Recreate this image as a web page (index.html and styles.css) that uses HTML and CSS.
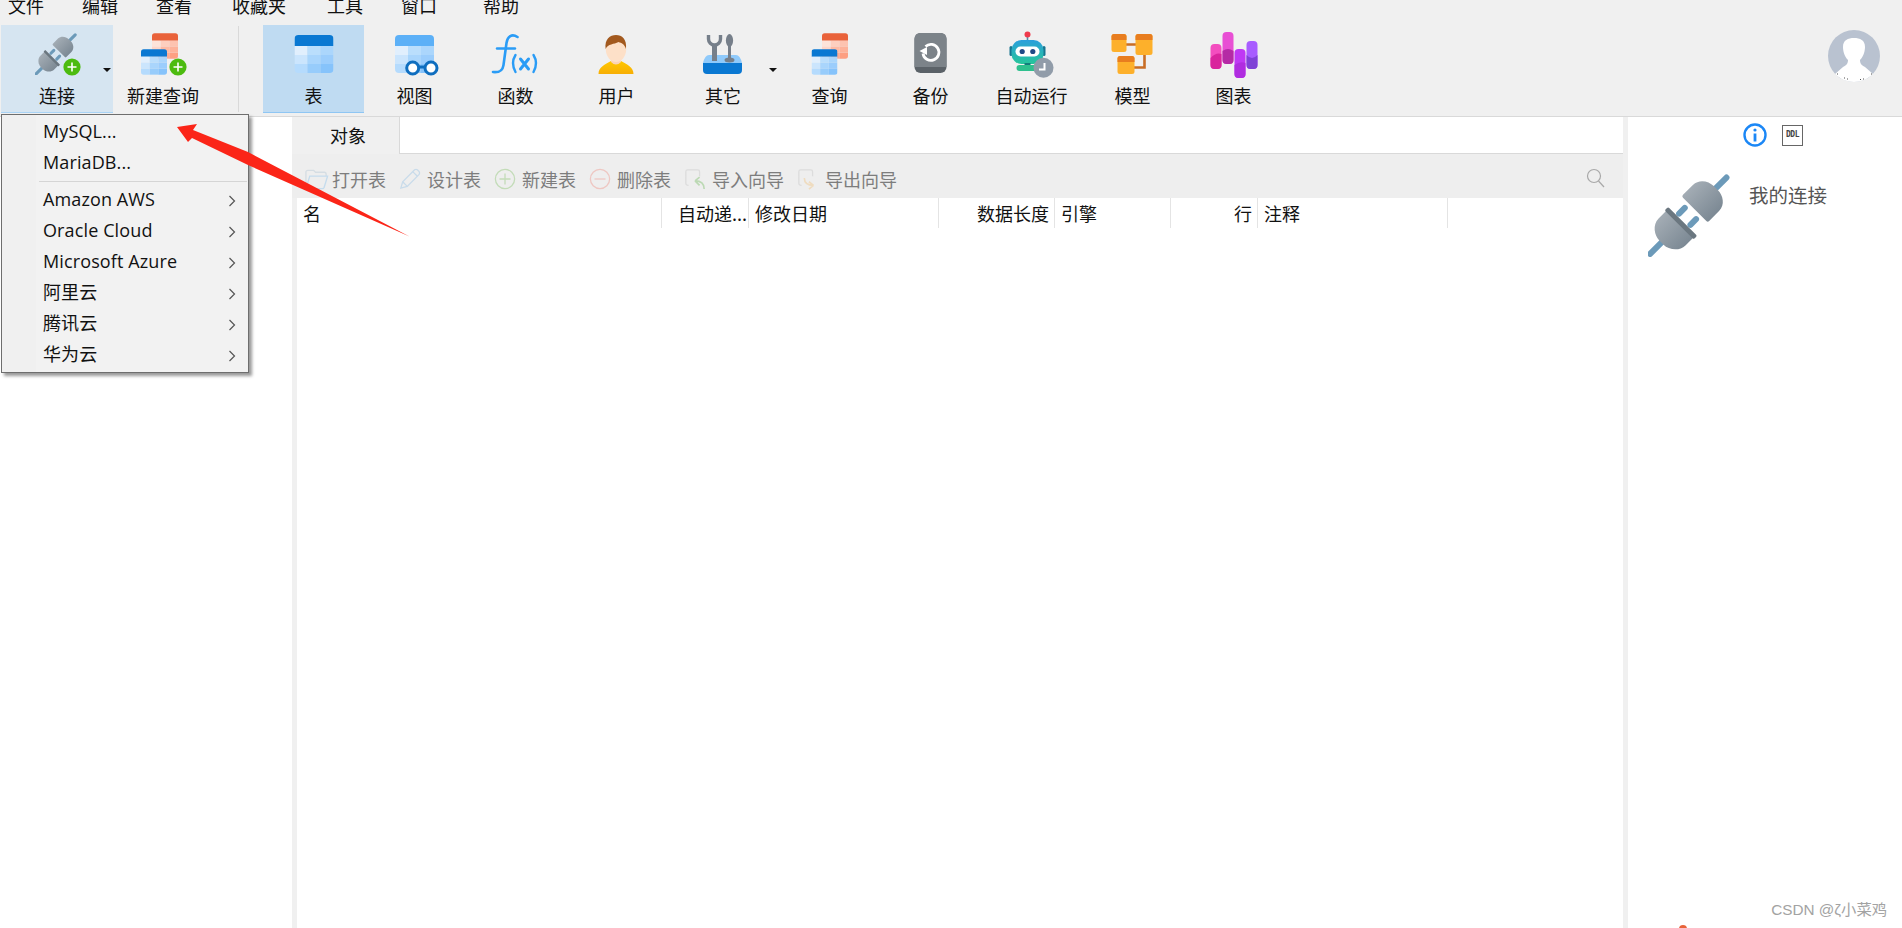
FILE: index.html
```html
<!DOCTYPE html>
<html lang="zh-CN">
<head>
<meta charset="utf-8">
<title>Navicat</title>
<link rel="stylesheet" href="styles.css">
</head>
<body>
<svg class="defs" aria-hidden="true">
  <defs>
    <linearGradient id="g-body2" x1="0" y1="0" x2="0" y2="1"><stop offset="0" stop-color="#a3acb4"/><stop offset="1" stop-color="#7c8994"/></linearGradient>
    <linearGradient id="g-amber" x1="0" y1="0" x2="0" y2="1"><stop offset="0" stop-color="#ffc800"/><stop offset="1" stop-color="#f7ae05"/></linearGradient>
    <linearGradient id="g-robot" x1="0" y1="0" x2="0" y2="1"><stop offset="0" stop-color="#2b9fdc"/><stop offset="1" stop-color="#26c59a"/></linearGradient>
    <symbol id="plug" viewBox="0 0 82 82">
      <g transform="translate(41 41) rotate(-45)">
        <rect x="34" y="-3" width="22" height="6" rx="3" fill="#6c9ab9"/>
        <path d="M10 -18.500 H24 C33 -18.500 38 -10 38 -3 V3 C38 10 33 18.500 24 18.500 H10 Q8 18.500 8 16.500 V-16.500 Q8 -18.500 10 -18.500 Z" fill="url(#g-body2)"/>
        <rect x="-9" y="-11" width="14" height="6" rx="3" fill="#6c9ab9"/>
        <rect x="-9" y="5" width="14" height="6" rx="3" fill="#6c9ab9"/>
        <rect x="-58" y="-3" width="24" height="6" rx="3" fill="#6c9ab9"/>
        <path d="M-11 -19 H-24 C-33 -19 -39 -10 -39 -3 V3 C-39 10 -33 19 -24 19 H-11 Z" fill="url(#g-body2)"/>
        <rect x="-14" y="-20.500" width="5" height="41" rx="1.500" fill="#6b7780"/>
      </g>
    </symbol>
    <symbol id="tbl-blue" viewBox="0 0 39 38">
      <path d="M0 11 V4 Q0 0 4 0 H35 Q39 0 39 4 V11 Z" fill="#0a78d2"/>
      <path d="M0 11 H13 V20 H0 Z" fill="#e1effd"/><path d="M13 11 H26 V20 H13 Z" fill="#badefc"/><path d="M26 11 H39 V20 H26 Z" fill="#abd6fc"/>
      <path d="M0 20 H13 V29 H0 Z" fill="#cbe5fd"/><path d="M13 20 H26 V29 H13 Z" fill="#a9d5fc"/><path d="M26 20 H39 V29 H26 Z" fill="#9bcdfc"/>
      <path d="M0 29 H13 V38 H4 Q0 38 0 34 Z" fill="#b5dbfd"/><path d="M13 29 H26 V38 H13 Z" fill="#97ccfb"/><path d="M26 29 H39 V34 Q39 38 35 38 H26 Z" fill="#86c3fb"/>
    </symbol>
    <symbol id="tbl-light" viewBox="0 0 39 38">
      <path d="M0 11 V4 Q0 0 4 0 H35 Q39 0 39 4 V11 Z" fill="#5cb0f7"/>
      <path d="M0 11 H13 V20 H0 Z" fill="#e1effd"/><path d="M13 11 H26 V20 H13 Z" fill="#badefc"/><path d="M26 11 H39 V20 H26 Z" fill="#abd6fc"/>
      <path d="M0 20 H13 V29 H0 Z" fill="#cbe5fd"/><path d="M13 20 H26 V29 H13 Z" fill="#a9d5fc"/><path d="M26 20 H39 V29 H26 Z" fill="#9bcdfc"/>
      <path d="M0 29 H13 V38 H4 Q0 38 0 34 Z" fill="#b5dbfd"/><path d="M13 29 H26 V38 H13 Z" fill="#97ccfb"/><path d="M26 29 H39 V34 Q39 38 35 38 H26 Z" fill="#86c3fb"/>
    </symbol>
    <symbol id="tbl-red" viewBox="0 0 39 38">
      <path d="M0 11 V4 Q0 0 4 0 H35 Q39 0 39 4 V11 Z" fill="#e9623a"/>
      <path d="M0 11 H13 V20 H0 Z" fill="#fde3d9"/><path d="M13 11 H26 V20 H13 Z" fill="#fdcfbf"/><path d="M26 11 H39 V20 H26 Z" fill="#fdc3b0"/>
      <path d="M0 20 H13 V29 H0 Z" fill="#fdd6c9"/><path d="M13 20 H26 V29 H13 Z" fill="#fdbba5"/><path d="M26 20 H39 V29 H26 Z" fill="#fdb29a"/>
      <path d="M0 29 H13 V38 H4 Q0 38 0 34 Z" fill="#fdc9b8"/><path d="M13 29 H26 V38 H13 Z" fill="#fdab90"/><path d="M26 29 H39 V34 Q39 38 35 38 H26 Z" fill="#fd9f82"/>
    </symbol>
    <symbol id="badge" viewBox="0 0 18 18">
      <circle cx="9" cy="9" r="8.600" fill="#4cbb0f"/>
      <path d="M4.500 9 H13.500 M9 4.500 V13.500" stroke="#fff" stroke-width="1.600"/>
    </symbol>
    <symbol id="chev" viewBox="0 0 8 12">
      <path d="M1.500 1 L6.500 6 L1.500 11" fill="none" stroke="#555" stroke-width="1.200"/>
    </symbol>
  </defs>
</svg>

<div class="app">
  <nav class="menubar">
    <span class="menu-item">文件</span>
    <span class="menu-item">编辑</span>
    <span class="menu-item">查看</span>
    <span class="menu-item">收藏夹</span>
    <span class="menu-item">工具</span>
    <span class="menu-item">窗口</span>
    <span class="menu-item">帮助</span>
  </nav>

  <header class="toolbar">
    <div class="tool tool-wide tool-hover">
      <svg class="tool-icon" viewBox="0 0 48 48"><use href="#plug" x="2" y="2" width="42" height="42"/><use href="#badge" x="30" y="27" width="18" height="18"/></svg>
      <span class="tool-label">连接</span>
      <i class="caret"></i>
    </div>
    <div class="tool tool-new">
      <svg class="tool-icon" viewBox="0 0 48 48"><use href="#tbl-red" x="13" y="2" width="26" height="26"/><use href="#tbl-blue" x="2" y="18" width="26" height="26"/><use href="#badge" x="30" y="27" width="18" height="18"/></svg>
      <span class="tool-label">新建查询</span>
    </div>
    <div class="tool-sep"></div>
    <div class="tool tool-active">
      <svg class="tool-icon" viewBox="0 0 48 48"><use href="#tbl-blue" x="4.500" y="4" width="39" height="38"/></svg>
      <span class="tool-label">表</span>
    </div>
    <div class="tool">
      <svg class="tool-icon" viewBox="0 0 48 48">
        <use href="#tbl-light" x="4" y="4" width="39" height="38"/>
        <path d="M27 36 H35" stroke="#0f6ebf" stroke-width="3"/>
        <circle cx="21.700" cy="37" r="6" fill="#fff" stroke="#0f6ebf" stroke-width="3"/>
        <circle cx="40" cy="37" r="6" fill="#fff" stroke="#0f6ebf" stroke-width="3"/>
      </svg>
      <span class="tool-label">视图</span>
    </div>
    <div class="tool">
      <svg class="tool-icon" viewBox="0 0 48 48" fill="none" stroke="#2a9cf6" stroke-linecap="round">
        <path d="M25.500 6 C20 2.500 15.500 5 14.500 12 L11.500 34 C10.500 41 6 41.500 1 41" stroke-width="2.600"/>
        <path d="M5 17.500 H23" stroke-width="2.400"/>
        <path d="M23.500 24 Q18.500 32 23.500 41" stroke-width="2.400"/>
        <path d="M28.500 28 L36.500 38 M36.500 28 L28.500 38" stroke-width="3"/>
        <path d="M41.500 24 Q46.500 32 41.500 41" stroke-width="2.400"/>
      </svg>
      <span class="tool-label">函数</span>
    </div>
    <div class="tool">
      <svg class="tool-icon" viewBox="0 0 48 48">
        <path d="M5.500 43 C5.500 36 12 33.500 18 30 H28 C34 33.500 40.500 36 40.500 43 Z" fill="url(#g-amber)"/>
        <path d="M18 26 H28 V31 Q23 36 18 31 Z" fill="#fbd3b5"/>
        <ellipse cx="23" cy="18" rx="10.200" ry="13" fill="#fde0c8"/>
        <path d="M12.600 18 C11.500 8 17 4 23 4 C29 4 34 8 33 18 C31.500 13 28.500 12 25.500 11 C21 13.500 15 12.500 12.600 18 Z" fill="#a2591e"/>
      </svg>
      <span class="tool-label">用户</span>
    </div>
    <div class="tool tool-wide">
      <svg class="tool-icon" viewBox="0 0 48 48">
        <path d="M10 24 H37 Q41 24 43 32 H4 Q6 24 10 24 Z" fill="#8fcafb"/>
        <path d="M9.500 4 V8 A6 6 0 0 0 21.500 8 V4" fill="none" stroke="#767f8a" stroke-width="3.400"/>
        <rect x="13" y="13" width="5" height="17" fill="#767f8a"/>
        <ellipse cx="30.500" cy="9.500" rx="3.600" ry="6.500" fill="#767f8a"/>
        <rect x="29" y="14" width="3" height="14" fill="#767f8a"/>
        <ellipse cx="30.500" cy="29" rx="5" ry="2.500" fill="#767f8a"/>
        <path d="M4 32 H43 V39 Q43 43 39 43 H8 Q4 43 4 39 Z" fill="#0a78d2"/>
      </svg>
      <span class="tool-label">其它</span>
      <i class="caret"></i>
    </div>
    <div class="tool">
      <svg class="tool-icon" viewBox="0 0 48 48"><use href="#tbl-red" x="16" y="2" width="26" height="26"/><use href="#tbl-blue" x="5.500" y="18" width="26" height="26"/></svg>
      <span class="tool-label">查询</span>
    </div>
    <div class="tool">
      <svg class="tool-icon" viewBox="0 0 48 48">
        <rect x="7.500" y="2" width="32" height="40" rx="6" fill="#5b6268"/>
        <path d="M13.500 2 H33.500 Q39.500 2 39.500 8 V36 H7.500 V8 Q7.500 2 13.500 2 Z" fill="#7c8389"/>
        <path d="M18.500 15.500 A8 8 0 1 1 16 22.500" fill="none" stroke="#fff" stroke-width="2.800"/>
        <path d="M12.500 20 L20 16 L20 24 Z" fill="#fff"/>
      </svg>
      <span class="tool-label">备份</span>
    </div>
    <div class="tool">
      <svg class="tool-icon" viewBox="0 0 48 48">
        <path d="M19.500 3 V11" stroke="#4d8fb0" stroke-width="1.600"/>
        <circle cx="19.500" cy="3.500" r="3" fill="#ef3b4d"/>
        <rect x="1.500" y="15" width="3" height="10" rx="1.500" fill="#17758f"/>
        <rect x="34.500" y="15" width="3" height="10" rx="1.500" fill="#17758f"/>
        <rect x="3.500" y="9" width="32" height="24" rx="10" fill="url(#g-robot)"/>
        <rect x="7.500" y="15.500" width="24" height="10" rx="5" fill="#fff"/>
        <circle cx="14.200" cy="20.500" r="2.600" fill="#1f4a86"/>
        <circle cx="24.800" cy="20.500" r="2.600" fill="#1f4a86"/>
        <rect x="16.500" y="32" width="6" height="3" fill="#137d7c"/>
        <rect x="8.500" y="34" width="24" height="6" rx="3" fill="#2fc08e"/>
        <circle cx="35.500" cy="36.700" r="10" fill="#919ca9"/>
        <path d="M36.500 32 V38.500 H31" fill="none" stroke="#fff" stroke-width="2"/>
      </svg>
      <span class="tool-label">自动运行</span>
    </div>
    <div class="tool">
      <svg class="tool-icon" viewBox="0 0 48 48">
        <path d="M17 13.500 H27 M35.500 24 V36.500 H25" fill="none" stroke="#c86d25" stroke-width="2.600"/>
        <rect x="2.500" y="3" width="15" height="18" rx="2.500" fill="#fdb02b"/>
        <path d="M2.500 9 V5.500 Q2.500 3 5 3 H15 Q17.500 3 17.500 5.500 V9 Z" fill="#e87d1f"/>
        <rect x="26.500" y="3" width="17" height="21" rx="2.500" fill="#fdb02b"/>
        <path d="M26.500 9 V5.500 Q26.500 3 29 3 H41 Q43.500 3 43.500 5.500 V9 Z" fill="#e87d1f"/>
        <rect x="8.500" y="25" width="17" height="18" rx="2.500" fill="#fdb02b"/>
        <path d="M8.500 31 V27.500 Q8.500 25 11 25 H23 Q25.500 25 25.500 27.500 V31 Z" fill="#e87d1f"/>
      </svg>
      <span class="tool-label">模型</span>
    </div>
    <div class="tool">
      <svg class="tool-icon" viewBox="0 0 48 48">
        <rect x="0.500" y="13" width="11" height="25" rx="4" fill="#f34ebf"/>
        <path d="M0.500 27 Q6 21 11.500 23 V34 Q11.500 38 7.500 38 H4.500 Q0.500 38 0.500 34 Z" fill="#d9259d"/>
        <rect x="12.500" y="1" width="11" height="32" rx="4" fill="#e84fd4"/>
        <path d="M12.500 20 Q18 16 23.500 20 V29 Q23.500 33 19.500 33 H16.500 Q12.500 33 12.500 29 Z" fill="#b52aa5"/>
        <rect x="24.500" y="18" width="11" height="29" rx="4" fill="#bf38f4"/>
        <path d="M24.500 34 Q30 30 35.500 32 V43 Q35.500 47 31.500 47 H28.500 Q24.500 47 24.500 43 Z" fill="#b02ce0"/>
        <rect x="36.500" y="10" width="11" height="28" rx="4" fill="#a85cff"/>
        <path d="M36.500 24 Q42 30 47.500 24 V34 Q47.500 38 43.500 38 H40.500 Q36.500 38 36.500 34 Z" fill="#7f42d6"/>
      </svg>
      <span class="tool-label">图表</span>
    </div>
    <div class="tool-spacer"></div>
    <svg class="avatar" viewBox="0 0 52 52">
      <circle cx="26" cy="26" r="26" fill="#b9c2d0"/>
      <path d="M7 44 L15 37 C19 35 20 33 20 30 C16 26 15 20 15 17 C15 10 20 8 26 8 C32 8 37 10 37 17 C37 20 36 26 32 30 C32 33 33 35 37 37 L45 44 C40 49 33 52 26 52 C19 52 12 49 7 44 Z" fill="#fff"/>
      <path d="M9 44 h.8 M16 48 h.8 M19 49 h.8 M35 49 h.8 M32 49.500 h.8 M43 44 h.8" stroke="#222" stroke-width="1"/>
    </svg>
  </header>

  <main class="workspace">
    <aside class="sidebar"></aside>

    <section class="center">
      <div class="tabs">
        <div class="tab">对象</div>
      </div>
      <div class="objbar">
        <div class="obj-btn obj-btn-tight">
          <svg class="obj-icon obj-icon-wide" viewBox="0 0 26 24" fill="none" stroke="#d5dde3" stroke-width="1.400">
            <path d="M2 20 V5 Q2 3 4 3 H10 L12 5 H21 Q23 5 23 7 V9"/>
            <path d="M6 9 H24.500 L21 20.500 Q20.500 22 19 22 H4 Q2.500 22 2.500 20.500 Z" stroke="#c5dced"/>
          </svg>
          <span class="obj-label">打开表</span>
        </div>
        <div class="obj-btn">
          <svg class="obj-icon" viewBox="0 0 24 24" fill="none" stroke="#c8dbea" stroke-width="1.400">
            <path d="M2 22 L4 15 L17 2 Q18.500 1 20 2 L22 4 Q23 5.500 22 7 L9 20 Z"/>
            <path d="M4 15 L9 20 M15 4 L20 9"/>
          </svg>
          <span class="obj-label">设计表</span>
        </div>
        <div class="obj-btn">
          <svg class="obj-icon" viewBox="0 0 24 24" fill="none" stroke="#c3dcb8" stroke-width="1.400">
            <circle cx="12" cy="12" r="10.500"/>
            <path d="M6 12 H18 M12 6 V18"/>
          </svg>
          <span class="obj-label">新建表</span>
        </div>
        <div class="obj-btn">
          <svg class="obj-icon" viewBox="0 0 24 24" fill="none" stroke="#eec7c2" stroke-width="1.400">
            <circle cx="12" cy="12" r="10.500"/>
            <path d="M6 12 H18"/>
          </svg>
          <span class="obj-label">删除表</span>
        </div>
        <div class="obj-btn">
          <svg class="obj-icon" viewBox="0 0 24 24" fill="none" stroke="#dcdcdc" stroke-width="1.400">
            <path d="M5 19 Q2 19 2 17 V4 Q2 2 4 2 H15 Q17 2 17 4 V9"/>
            <path d="M22 23 Q22 14 12 14 M12 14 L17 10 M12 14 L17 19" stroke="#bcd9b4" stroke-width="1.800"/>
          </svg>
          <span class="obj-label">导入向导</span>
        </div>
        <div class="obj-btn">
          <svg class="obj-icon" viewBox="0 0 24 24" fill="none" stroke="#dcdcdc" stroke-width="1.400">
            <path d="M5 19 Q2 19 2 17 V4 Q2 2 4 2 H15 Q17 2 17 4 V9"/>
            <path d="M8 11 Q8 19 18 19 M18 19 L13 15 M18 19 L13 23" stroke="#efdcc0" stroke-width="1.800"/>
          </svg>
          <span class="obj-label">导出向导</span>
        </div>
        <svg class="search-icon" viewBox="0 0 20 20" fill="none" stroke="#a8a8a8" stroke-width="1.200">
          <circle cx="8" cy="8" r="6.500"/>
          <path d="M12.500 13 L18 19"/>
        </svg>
      </div>
      <div class="table-area">
        <div class="thead">
          <div class="th">名</div>
          <div class="th th-right th-tight">自动递...</div>
          <div class="th">修改日期</div>
          <div class="th th-right">数据长度</div>
          <div class="th">引擎</div>
          <div class="th th-right">行</div>
          <div class="th">注释</div>
          <div class="th th-last"></div>
        </div>
      </div>
    </section>

    <aside class="details">
      <div class="detail-tabs">
        <svg class="info-icon" viewBox="0 0 24 24">
          <circle cx="12" cy="12" r="10.500" fill="#fff" stroke="#1b87f6" stroke-width="2.400"/>
          <circle cx="12" cy="7" r="1.600" fill="#1b87f6"/>
          <path d="M12 10.500 V18.500" stroke="#1b87f6" stroke-width="2.800"/>
        </svg>
        <div class="ddl-icon">DDL</div>
      </div>
      <div class="detail-body">
        <svg class="big-plug"><use href="#plug" width="82" height="84"/></svg>
        <div class="detail-title">我的连接</div>
      </div>
    </aside>
  </main>

  <div class="dropdown">
    <div class="dd-item">MySQL...</div>
    <div class="dd-item">MariaDB...</div>
    <div class="dd-sep"></div>
    <div class="dd-item">Amazon AWS<svg class="dd-chev"><use href="#chev" width="8" height="12"/></svg></div>
    <div class="dd-item">Oracle Cloud<svg class="dd-chev"><use href="#chev" width="8" height="12"/></svg></div>
    <div class="dd-item">Microsoft Azure<svg class="dd-chev"><use href="#chev" width="8" height="12"/></svg></div>
    <div class="dd-item">阿里云<svg class="dd-chev"><use href="#chev" width="8" height="12"/></svg></div>
    <div class="dd-item">腾讯云<svg class="dd-chev"><use href="#chev" width="8" height="12"/></svg></div>
    <div class="dd-item">华为云<svg class="dd-chev"><use href="#chev" width="8" height="12"/></svg></div>
  </div>

  <svg class="red-arrow" viewBox="170 118 245 122">
    <path d="M177 127 L197 124 L193 130 L248 152 L409.500 236.500 L248 165 L192 138 L188 142 Z" fill="#fb2518"/>
  </svg>

  <div class="watermark">CSDN @ζ小菜鸡</div>
  <i class="orange-dot"></i>
</div>
</body>
</html>
```

FILE: styles.css
```css
* { box-sizing: border-box; }

html, body {
  margin: 0;
  height: 100%;
  overflow: hidden;
  background: #f0f0f0;
}

body {
  font-family: "Open Sans", "Noto Sans CJK SC", sans-serif;
  font-size: 18px;
  color: #111;
}

.defs {
  position: absolute;
  width: 0;
  height: 0;
}

.app {
  position: relative;
  width: 1902px;
  height: 928px;
  display: flex;
  flex-direction: column;
  overflow: hidden;
}

/* menu bar (scrolled partly out of the photo) */
.menubar {
  height: 25px;
  flex: none;
  display: grid;
  grid-template-columns: 74px 74px 76px 95px 74px 82px auto;
  justify-content: start;
  padding-left: 8px;
  overflow: hidden;
  font-family: "Noto Sans CJK SC", sans-serif;
}

.menu-item {
  height: 18px;
  line-height: 18px;
  margin-top: -4px;
}

/* main toolbar */
.toolbar {
  height: 92px;
  flex: none;
  display: flex;
  align-items: flex-start;
  padding-left: 1px;
  border-bottom: 1px solid #d9d9d9;
}

.tool {
  position: relative;
  width: 101px;
  height: 88px;
  flex: none;
  display: flex;
  flex-direction: column;
  align-items: center;
  padding-top: 6px;
  border-bottom: 1px solid transparent;
}

.tool-wide { width: 112px; }
.tool-new { width: 100px; }

.tool-hover {
  background: #d6e5f1;
  border-bottom-color: #a9d3f5;
}

.tool-active {
  background: #bfdbf2;
  border-bottom-color: #8fc6f3;
}

.tool-icon {
  width: 48px;
  height: 48px;
  flex: none;
  overflow: visible;
}

.tool-label {
  margin-top: 4px;
  height: 24px;
  line-height: 24px;
  font-family: "Noto Sans CJK SC", sans-serif;
  white-space: nowrap;
}

.caret {
  position: absolute;
  right: 2px;
  top: 43px;
  width: 0;
  height: 0;
  border-left: 4px solid transparent;
  border-right: 4px solid transparent;
  border-top: 4px solid #111;
}

.tool-sep {
  width: 1px;
  height: 86px;
  margin: 1px 24px 0 25px;
  background: #d9d9d9;
  flex: none;
}

.tool-spacer { flex: 1; }

.avatar {
  width: 52px;
  height: 52px;
  margin: 5px 22px 0 0;
  flex: none;
}

/* workspace */
.workspace {
  flex: 1;
  display: flex;
  min-height: 0;
}

.sidebar {
  width: 292px;
  flex: none;
  background: #fff;
}

.center {
  width: 1331px;
  flex: none;
  display: flex;
  flex-direction: column;
}

.tabs {
  height: 37px;
  flex: none;
  background: #fff;
  border-bottom: 1px solid #d9d9d9;
  display: flex;
}

.tab {
  width: 108px;
  margin-bottom: -1px;
  background: #f0f0f0;
  border-right: 1px solid #d9d9d9;
  display: flex;
  align-items: center;
  justify-content: center;
  font-family: "Noto Sans CJK SC", sans-serif;
  padding-bottom: 2px;
  padding-left: 5px;
}

.objbar {
  height: 44px;
  flex: none;
  background: #eeeeee;
  display: flex;
  align-items: center;
  padding: 6px 17px 0 12px;
  gap: 13px;
}

.obj-btn {
  display: flex;
  align-items: center;
  gap: 6px;
}

.obj-btn-tight { gap: 3px; }

.obj-icon {
  width: 22px;
  height: 24px;
  flex: none;
}

.obj-icon-wide { width: 25px; }

.obj-label {
  font-family: "Noto Sans CJK SC", sans-serif;
  color: #7d7d7d;
  line-height: 24px;
  white-space: nowrap;
}

.search-icon {
  width: 20px;
  height: 20px;
  margin-left: auto;
  margin-top: -2px;
}

.table-area {
  flex: 1;
  margin-left: 5px;
  background: #fff;
}

.thead {
  height: 30px;
  display: grid;
  grid-template-columns: 365px 87px 190px 116px 116px 87px 190px 1fr;
}

.th {
  border-right: 1px solid #e4e4e4;
  padding: 0 5px 0 6px;
  line-height: 30px;
  font-family: "Noto Sans CJK SC", sans-serif;
  white-space: nowrap;
  overflow: hidden;
}

.th-right { text-align: right; }
.th-tight { padding-right: 1px; }
.th-last { border-right: 0; }

/* right panel */
.details {
  flex: 1;
  margin-left: 5px;
  background: #fff;
  padding-left: 20px;
}

.detail-tabs {
  height: 56px;
  display: flex;
  align-items: flex-start;
  padding: 6px 0 0 95px;
  gap: 15px;
}

.info-icon {
  width: 24px;
  height: 24px;
  flex: none;
}

.ddl-icon {
  width: 21px;
  height: 21px;
  margin-top: 2px;
  border: 1.5px solid #666;
  font: 700 8px/18px "DejaVu Sans Mono", monospace;
  color: #444;
  text-align: center;
  letter-spacing: -0.5px;
}

.detail-body {
  display: flex;
  align-items: flex-start;
}

.big-plug {
  width: 82px;
  height: 84px;
  flex: none;
}

.detail-title {
  margin: 11px 0 0 19px;
  font-family: "Liberation Serif", "Noto Sans CJK SC", serif;
  font-size: 19.5px;
  line-height: 26px;
  color: #555;
}

/* connection dropdown */
.dropdown {
  position: absolute;
  left: 1px;
  top: 114px;
  width: 248px;
  height: 259px;
  padding-top: 2px;
  border: 1px solid #6e6e6e;
  background: linear-gradient(90deg, #f0f0f0 34px, #f2f2f2 34px);
  box-shadow: 3px 3px 3px rgba(0, 0, 0, 0.4);
}

.dd-item {
  position: relative;
  height: 31px;
  line-height: 28px;
  padding-left: 41px;
  letter-spacing: 0.12px;
  white-space: nowrap;
}

.dd-sep {
  height: 1px;
  margin: 2px 1px 3px 37px;
  background: #d5d5d5;
}

.dd-chev {
  position: absolute;
  right: 12px;
  top: 10px;
  width: 8px;
  height: 12px;
}

.red-arrow {
  position: absolute;
  left: 170px;
  top: 118px;
  width: 245px;
  height: 122px;
}

.watermark {
  position: absolute;
  right: 15px;
  top: 900px;
  font-family: "Liberation Sans", "Noto Sans CJK SC", sans-serif;
  font-size: 15.3px;
  line-height: 20px;
  color: #a3a3a3;
}

.orange-dot {
  position: absolute;
  left: 1679px;
  top: 925px;
  width: 8px;
  height: 8px;
  border-radius: 50%;
  background: #e8633a;
}
```
